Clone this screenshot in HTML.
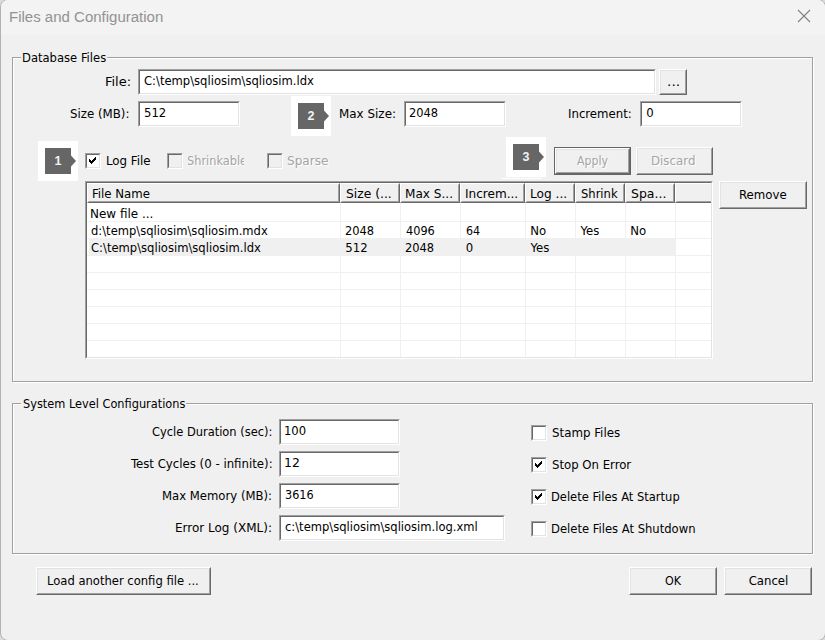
<!DOCTYPE html><html><head><meta charset="utf-8"><title>Files and Configuration</title><style>

html,body{margin:0;padding:0}
body{width:825px;height:640px;overflow:hidden;background:#dcdcdc;position:relative;font-family:"DejaVu Sans Condensed","DejaVu Sans","Liberation Sans",sans-serif;font-size:13px;color:#000}
.abs,.tx,.sunk,.btn,.grp,.cw,.cn,.gl,.hd,.ln{position:absolute;box-sizing:border-box}
.tx{white-space:pre;line-height:16px;height:16px;transform-origin:0 0}
.dis{color:#a5a5a5;text-shadow:1px 1px 0 #fff}
.sunk{border:1px solid;border-color:#a0a0a0 #fff #fff #a0a0a0}
.sunk::before{content:"";position:absolute;left:0;top:0;right:0;bottom:0;border:1px solid;border-color:#696969 #e3e3e3 #e3e3e3 #696969;pointer-events:none}
.btn{border:1px solid;border-color:#fff #696969 #696969 #fff;background:#f0f0f0}
.btn::before{content:"";position:absolute;left:0;top:0;right:0;bottom:0;border:1px solid;border-color:#e3e3e3 #a0a0a0 #a0a0a0 #e3e3e3}
.grp{border:1px solid #a0a0a0;box-shadow:1px 1px 0 #fff, inset 1px 1px 0 #fff}
.gl{background:#f0f0f0;white-space:pre;line-height:16px;height:16px;padding:0}
.gl span{display:inline-block;transform-origin:0 0}
.cw{width:40px;height:40px;background:#fff}
.cn{width:26px;height:26px;line-height:26px;text-align:center;color:#f2f2f2;font-family:"Liberation Sans",sans-serif;font-size:12.5px;font-weight:bold}
#win{position:absolute;left:0;top:-1px;width:826px;height:642px;box-sizing:border-box;border:1px solid #b2b2b2;border-radius:8px;background:#f0f0f0;overflow:hidden}
#titlebar{position:absolute;left:0;top:0;width:825px;height:35px;background:#f3f3f3}
#title{position:absolute;left:9.2px;top:7px;font-family:"Liberation Sans",sans-serif;font-size:15.5px;line-height:20px;color:#929292;white-space:pre;transform-origin:0 0;transform:scaleX(0.968)}
.hd{background:#f0f0f0;border:1px solid;border-color:#fff #696969 #696969 #fff;height:20px;top:0}
.hd::before{content:"";position:absolute;left:0;top:0;right:0;bottom:0;border:1px solid;border-color:transparent #a0a0a0 #a0a0a0 transparent}
.ln{background:#f0f0f0}

</style></head><body>
<div id="win"><div style="position:absolute;left:0;top:0;width:826px;height:35px;background:#f3f3f3"></div></div>
<div id="title">Files and Configuration</div>
<svg class="abs" style="left:796px;top:8px" width="16" height="16" viewBox="0 0 16 16"><path d="M2 2L14 14M14 2L2 14" stroke="#808080" stroke-width="1.1" fill="none"/></svg>
<div class="grp" style="left:12px;top:57px;width:801px;height:325px"></div>
<div class="grp" style="left:12px;top:403px;width:801px;height:151px"></div>
<div class="gl" style="left:21px;width:86px;top:50px"><span id="g0" style="margin-left:1.41px;transform:scaleX(0.9892)">Database Files</span></div>
<div class="gl" style="left:21px;width:165px;top:396px"><span id="g1" style="margin-left:1.72px;transform:scaleX(0.9705)">System Level Configurations</span></div>
<div class="sunk" style="left:138px;top:69px;width:518px;height:26px;background:#fff"></div>
<div class="btn " style="left:659px;top:69px;width:28px;height:26px"></div>
<div class="sunk" style="left:138px;top:101px;width:102px;height:26px;background:#fff"></div>
<div class="sunk" style="left:404px;top:101px;width:102px;height:26px;background:#fff"></div>
<div class="sunk" style="left:640px;top:101px;width:102px;height:26px;background:#fff"></div>
<div class="cw" style="left:38px;top:141px"></div><svg class="abs" style="left:45px;top:148px" width="32" height="26" viewBox="0 0 32 26"><path d="M0 0H26V7.5L31 13L26 18.5V26H0Z" fill="#666"/></svg><span class="cn" style="left:45px;top:148px">1</span>
<div class="cw" style="left:291px;top:96px"></div><svg class="abs" style="left:298px;top:103px" width="32" height="26" viewBox="0 0 32 26"><path d="M0 0H26V7.5L31 13L26 18.5V26H0Z" fill="#666"/></svg><span class="cn" style="left:298px;top:103px">2</span>
<div class="cw" style="left:506px;top:137px"></div><svg class="abs" style="left:513px;top:144px" width="32" height="26" viewBox="0 0 32 26"><path d="M0 0H26V7.5L31 13L26 18.5V26H0Z" fill="#666"/></svg><span class="cn" style="left:513px;top:144px">3</span>
<div class="abs" style="left:502px;top:178px;width:40px;height:1px;background:#fff"></div>
<div class="sunk" style="left:85px;top:153px;width:16px;height:16px;background:#fff"><svg width="14" height="14" viewBox="0 0 14 14" shape-rendering="crispEdges" style="position:absolute;left:0;top:0"><path d="M9 3h1v1h-1zM8 4h2v1h-2zM3 5h1v1h-1zM7 5h3v1h-3zM3 6h2v1h-2zM6 6h3v1h-3zM3 7h5v1h-5zM4 8h3v1h-3zM5 9h1v1h-1z" fill="#000"/></svg></div>
<div class="sunk" style="left:167px;top:153px;width:16px;height:16px;background:#f0f0f0"></div>
<div class="sunk" style="left:267px;top:153px;width:16px;height:16px;background:#f0f0f0"></div>
<div class="abs" style="left:187.7px;top:153px;width:56px;height:17px;overflow:hidden"><span class="tx dis" style="left:-1px;top:0;transform:scaleX(0.97)">Shrinkable</span></div>
<div class="abs" style="left:554px;top:147px;width:77px;height:28px;background:#646464"></div>
<div class="btn " style="left:555px;top:148px;width:75px;height:26px"></div>
<div class="btn " style="left:636px;top:147px;width:77px;height:28px"></div>
<div class="btn " style="left:719px;top:181px;width:88px;height:28px"></div>
<div class="sunk" style="left:85px;top:181px;width:628px;height:178px;background:#fff"><div class="abs" style="left:1px;top:1px;width:624px;height:174px;overflow:hidden"><div class="hd" style="left:0px;width:253px"></div><div class="hd" style="left:253px;width:60px"></div><div class="hd" style="left:313px;width:60px"></div><div class="hd" style="left:373px;width:65px"></div><div class="hd" style="left:438px;width:50px"></div><div class="hd" style="left:488px;width:50px"></div><div class="hd" style="left:538px;width:50px"></div><div class="hd" style="left:588px;width:40px"></div><div class="ln" style="left:253px;top:20px;width:1px;height:154px"></div><div class="ln" style="left:313px;top:20px;width:1px;height:154px"></div><div class="ln" style="left:373px;top:20px;width:1px;height:154px"></div><div class="ln" style="left:438px;top:20px;width:1px;height:154px"></div><div class="ln" style="left:488px;top:20px;width:1px;height:154px"></div><div class="ln" style="left:538px;top:20px;width:1px;height:154px"></div><div class="ln" style="left:588px;top:20px;width:1px;height:154px"></div><div class="ln" style="left:0;top:38px;width:624px;height:1px"></div><div class="ln" style="left:0;top:55px;width:624px;height:1px"></div><div class="ln" style="left:0;top:72px;width:624px;height:1px"></div><div class="ln" style="left:0;top:89px;width:624px;height:1px"></div><div class="ln" style="left:0;top:106px;width:624px;height:1px"></div><div class="ln" style="left:0;top:123px;width:624px;height:1px"></div><div class="ln" style="left:0;top:140px;width:624px;height:1px"></div><div class="ln" style="left:0;top:157px;width:624px;height:1px"></div><div class="ln" style="left:2px;top:56px;width:586px;height:16px"></div></div></div>
<div class="sunk" style="left:279px;top:419px;width:121px;height:26px;background:#fff"></div>
<div class="sunk" style="left:279px;top:451px;width:121px;height:26px;background:#fff"></div>
<div class="sunk" style="left:279px;top:483px;width:121px;height:26px;background:#fff"></div>
<div class="sunk" style="left:279px;top:515px;width:226px;height:26px;background:#fff"></div>
<div class="sunk" style="left:531px;top:425px;width:16px;height:16px;background:#fff"></div>
<div class="sunk" style="left:531px;top:457px;width:16px;height:16px;background:#fff"><svg width="14" height="14" viewBox="0 0 14 14" shape-rendering="crispEdges" style="position:absolute;left:0;top:0"><path d="M9 3h1v1h-1zM8 4h2v1h-2zM3 5h1v1h-1zM7 5h3v1h-3zM3 6h2v1h-2zM6 6h3v1h-3zM3 7h5v1h-5zM4 8h3v1h-3zM5 9h1v1h-1z" fill="#000"/></svg></div>
<div class="sunk" style="left:531px;top:489px;width:16px;height:16px;background:#fff"><svg width="14" height="14" viewBox="0 0 14 14" shape-rendering="crispEdges" style="position:absolute;left:0;top:0"><path d="M9 3h1v1h-1zM8 4h2v1h-2zM3 5h1v1h-1zM7 5h3v1h-3zM3 6h2v1h-2zM6 6h3v1h-3zM3 7h5v1h-5zM4 8h3v1h-3zM5 9h1v1h-1z" fill="#000"/></svg></div>
<div class="sunk" style="left:531px;top:521px;width:16px;height:16px;background:#fff"></div>
<div class="btn " style="left:36px;top:567px;width:175px;height:28px"></div>
<div class="btn " style="left:629px;top:567px;width:88px;height:28px"></div>
<div class="btn " style="left:724px;top:567px;width:88px;height:28px"></div>
<span class="tx" id="t0" style="left:105.37px;top:74.00px;transform:scaleX(1.1143)">File:</span>
<span class="tx" id="t1" style="left:69.94px;top:106.00px;transform:scaleX(1.0079)">Size (MB):</span>
<span class="tx" id="t2" style="left:339.38px;top:106.00px;transform:scaleX(1.0206)">Max Size:</span>
<span class="tx" id="t3" style="left:567.65px;top:106.00px;transform:scaleX(1.0025)">Increment:</span>
<span class="tx" id="t4" style="left:105.64px;top:153.00px;transform:scaleX(1.0106)">Log File</span>
<span class="tx dis" id="t5" style="left:286.77px;top:153.00px;transform:scaleX(1.0336)">Sparse</span>
<span class="tx dis" id="t6" style="left:576.71px;top:153.00px;transform:scaleX(0.9354)">Apply</span>
<span class="tx dis" id="t7" style="left:651.39px;top:153.00px;transform:scaleX(1.0096)">Discard</span>
<span class="tx" id="t8" style="left:738.89px;top:187.00px;transform:scaleX(1.0066)">Remove</span>
<span class="tx" id="t9" style="left:666.66px;top:74.00px;transform:scaleX(1.1860)">...</span>
<span class="tx" id="t10" style="left:143.71px;top:73.00px;transform:scaleX(0.9900)">C:\temp\sqliosim\sqliosim.ldx</span>
<span class="tx" id="t11" style="left:143.50px;top:105.00px;transform:scaleX(0.9950)">512</span>
<span class="tx" id="t12" style="left:409.12px;top:105.00px;transform:scaleX(0.9786)">2048</span>
<span class="tx" id="t13" style="left:646.20px;top:105.00px;transform:scaleX(1.0000)">0</span>
<span class="tx" id="t14" style="left:92.15px;top:186.00px;transform:scaleX(1.0045)">File Name</span>
<span class="tx" id="t15" style="left:345.66px;top:186.00px;transform:scaleX(1.0531)">Size (...</span>
<span class="tx" id="t16" style="left:405.36px;top:186.00px;transform:scaleX(1.0340)">Max S...</span>
<span class="tx" id="t17" style="left:465.37px;top:186.00px;transform:scaleX(1.0305)">Increm...</span>
<span class="tx" id="t18" style="left:530.26px;top:186.00px;transform:scaleX(1.0389)">Log ...</span>
<span class="tx" id="t19" style="left:580.51px;top:186.00px;transform:scaleX(0.9862)">Shrink</span>
<span class="tx" id="t20" style="left:630.65px;top:186.00px;transform:scaleX(1.0675)">Spa...</span>
<span class="tx" id="t21" style="left:90.37px;top:206.00px;transform:scaleX(1.0235)">New file ...</span>
<span class="tx" id="t22" style="left:91.16px;top:223.00px;transform:scaleX(0.9868)">d:\temp\sqliosim\sqliosim.mdx</span>
<span class="tx" id="t23" style="left:345.32px;top:223.00px;transform:scaleX(0.9786)">2048</span>
<span class="tx" id="t24" style="left:405.62px;top:223.00px;transform:scaleX(0.9683)">4096</span>
<span class="tx" id="t25" style="left:465.74px;top:223.00px;transform:scaleX(0.9478)">64</span>
<span class="tx" id="t26" style="left:530.30px;top:223.00px;transform:scaleX(1.0000)">No</span>
<span class="tx" id="t27" style="left:580.60px;top:223.00px;transform:scaleX(1.0000)">Yes</span>
<span class="tx" id="t28" style="left:630.30px;top:223.00px;transform:scaleX(1.0000)">No</span>
<span class="tx" id="t29" style="left:91.06px;top:240.00px;transform:scaleX(0.9892)">C:\temp\sqliosim\sqliosim.ldx</span>
<span class="tx" id="t30" style="left:345.30px;top:240.00px;transform:scaleX(1.0000)">512</span>
<span class="tx" id="t31" style="left:405.32px;top:240.00px;transform:scaleX(0.9786)">2048</span>
<span class="tx" id="t32" style="left:465.70px;top:240.00px;transform:scaleX(1.0000)">0</span>
<span class="tx" id="t33" style="left:530.60px;top:240.00px;transform:scaleX(1.0000)">Yes</span>
<span class="tx" id="t34" style="left:151.82px;top:424.00px;transform:scaleX(0.9781)">Cycle Duration (sec):</span>
<span class="tx" id="t35" style="left:130.50px;top:456.00px;transform:scaleX(1.0047)">Test Cycles (0 - infinite):</span>
<span class="tx" id="t36" style="left:162.15px;top:488.00px;transform:scaleX(0.9963)">Max Memory (MB):</span>
<span class="tx" id="t37" style="left:175.12px;top:520.00px;transform:scaleX(1.0272)">Error Log (XML):</span>
<span class="tx" id="t38" style="left:284.21px;top:423.00px;transform:scaleX(0.9901)">100</span>
<span class="tx" id="t39" style="left:284.12px;top:455.00px;transform:scaleX(1.0645)">12</span>
<span class="tx" id="t40" style="left:284.64px;top:487.00px;transform:scaleX(0.9609)">3616</span>
<span class="tx" id="t41" style="left:284.61px;top:519.00px;transform:scaleX(0.9861)">c:\temp\sqliosim\sqliosim.log.xml</span>
<span class="tx" id="t42" style="left:551.69px;top:425.00px;transform:scaleX(1.0129)">Stamp Files</span>
<span class="tx" id="t43" style="left:551.70px;top:457.00px;transform:scaleX(1.0013)">Stop On Error</span>
<span class="tx" id="t44" style="left:551.42px;top:489.00px;transform:scaleX(0.9830)">Delete Files At Startup</span>
<span class="tx" id="t45" style="left:551.41px;top:521.00px;transform:scaleX(0.9903)">Delete Files At Shutdown</span>
<span class="tx" id="t46" style="left:46.91px;top:573.00px;transform:scaleX(0.9894)">Load another config file ...</span>
<span class="tx" id="t47" style="left:664.63px;top:573.00px;transform:scaleX(0.9512)">OK</span>
<span class="tx" id="t48" style="left:748.70px;top:573.00px;transform:scaleX(1.0000)">Cancel</span>
</body></html>
